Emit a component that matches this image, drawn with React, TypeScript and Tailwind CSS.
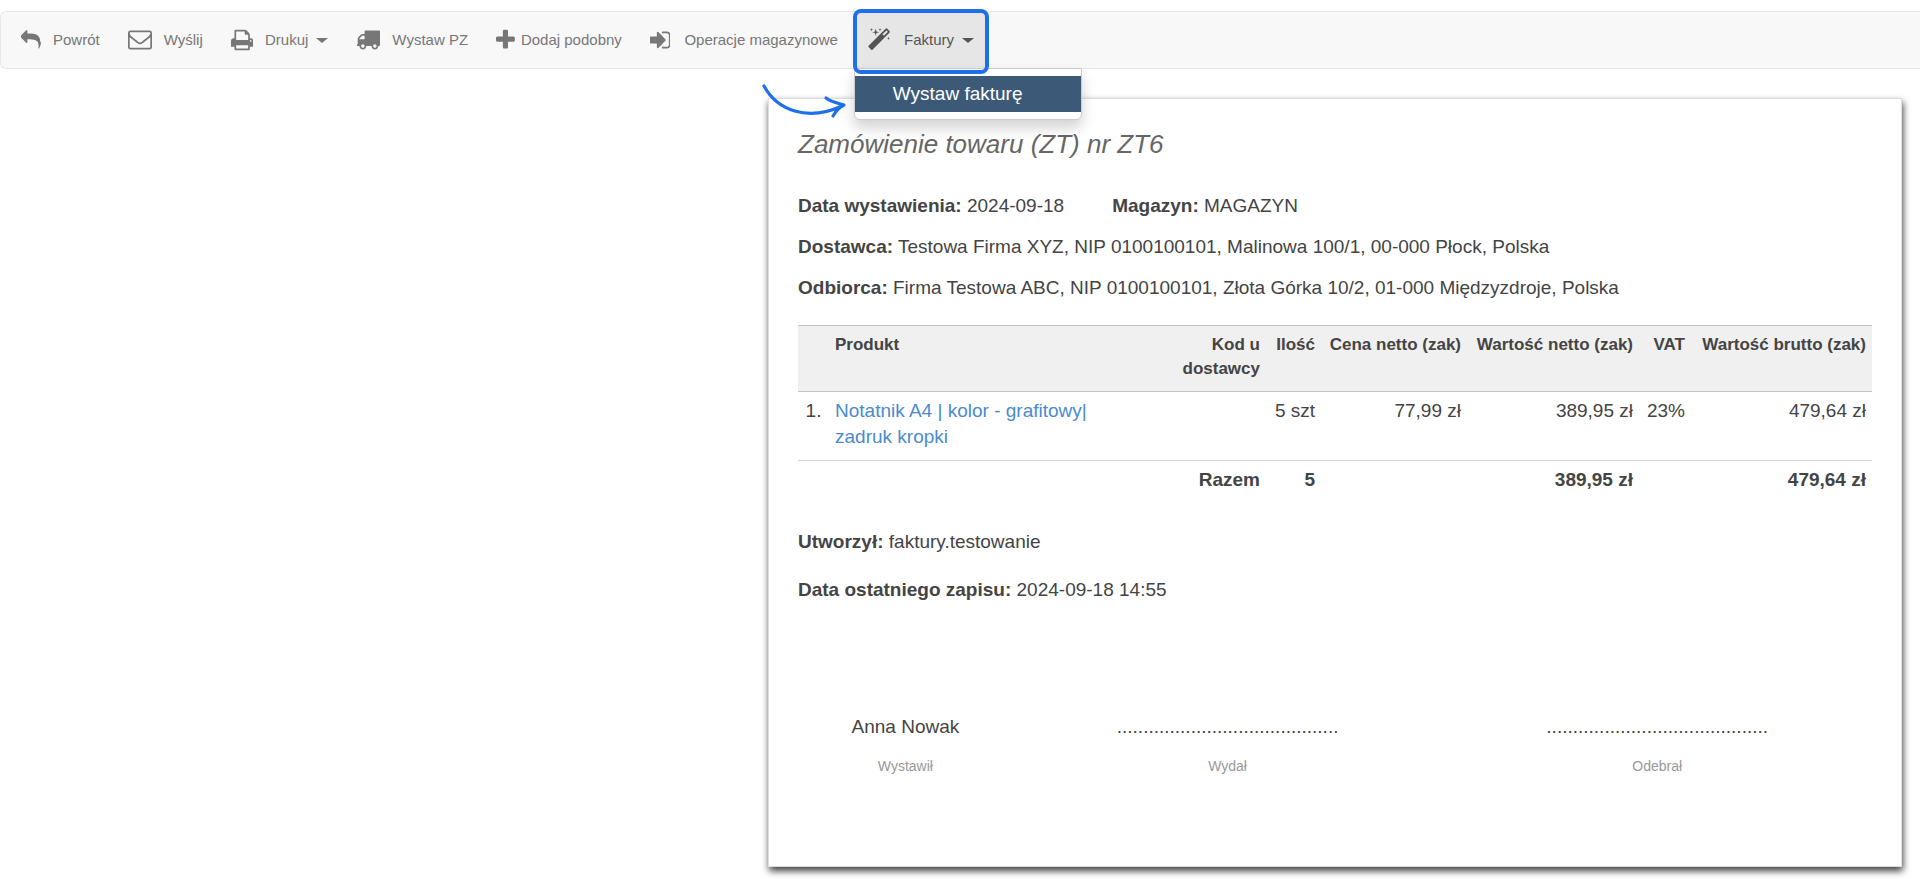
import { useState, type ReactNode } from "react";

type IconProps = { path: string; viewBox: string; className?: string };

const Icon = ({ path, viewBox, className = "h-6" }: IconProps) => (
  <svg viewBox={viewBox} className={`${className} w-auto shrink-0 fill-current`} aria-hidden="true">
    <path d={path} />
  </svg>
);

const icons = {
  reply: {
    viewBox: "0 0 1792 1792",
    path: "M1792 1120q0 166-127 451-3 7-10.5 24t-13.5 30-13 22q-12 17-28 17-15 0-23.5-10t-8.5-25q0-9 2.5-26.5t2.5-23.5q5-68 5-123 0-112-19.5-200.5t-54-153.5-89-112-118-77.5-147.5-47-168-24.5-187.5-7h-224v256q0 26-19 45t-45 19-45-19l-512-512q-19-19-19-45t19-45l512-512q19-19 45-19t45 19 19 45v256h224q713 0 875 403 53 134 53 333z",
  },
  envelope: {
    viewBox: "0 64 1792 1792",
    path: "M1664 1504v-768q-32 36-69 66-268 206-426 338-51 43-83 67t-86.5 48.5-102.5 24.5h-2q-48 0-102.5-24.5t-86.5-48.5-83-67q-158-132-426-338-37-30-69-66v768q0 13 9.5 22.5t22.5 9.5h1472q13 0 22.5-9.5t9.5-22.5zm0-1051v-24.5l-.5-13-3-12.5-5.5-9-9-7.5-14-2.5h-1472q-13 0-22.5 9.5t-9.5 22.5q0 168 147 284 193 152 401 317 6 5 35 29.5t46 37.5 44.5 31.5 50.5 27.5 43 9h2q20 0 43-9t50.5-27.5 44.5-31.5 46-37.5 35-29.5q208-165 401-317 54-43 100.5-115.5t46.5-131.5zm128-37v1088q0 66-47 113t-113 47h-1472q-66 0-113-47t-47-113v-1088q0-66 47-113t113-47h1472q66 0 113 47t47 113z",
  },
  print: {
    viewBox: "64 0 1664 1792",
    path: "M448 1536h896v-256h-896v256zm0-640h896v-384h-160q-40 0-68-28t-28-68v-160h-640v640zm1152 64q0-26-19-45t-45-19-45 19-19 45 19 45 45 19 45-19 19-45zm128 0v416q0 13-9.5 22.5t-22.5 9.5h-224v160q0 40-28 68t-68 28h-960q-40 0-68-28t-28-68v-160h-224q-13 0-22.5-9.5t-9.5-22.5v-416q0-79 56.5-135.5t135.5-56.5h64v-544q0-40 28-68t68-28h672q40 0 88 20t76 48l152 152q28 28 48 76t20 88v256h64q79 0 135.5 56.5t56.5 135.5z",
  },
  truck: {
    viewBox: "0 64 1792 1792",
    path: "M640 1408q0-52-38-90t-90-38-90 38-38 90 38 90 90 38 90-38 38-90zm-384-512h384v-256h-158q-13 0-22 9l-195 195q-9 9-9 22v30zm1280 512q0-52-38-90t-90-38-90 38-38 90 38 90 90 38 90-38 38-90zm256-1088v1024q0 15-4 26.5t-13.5 18.5-16.5 11.5-23.5 6-22.5 2-25.5 0-22.5-.5q0 106-75 181t-181 75-181-75-75-181h-384q0 106-75 181t-181 75-181-75-75-181h-64q-3 0-22.5.5t-25.5 0-22.5-2-23.5-6-16.5-11.5-13.5-18.5-4-26.5q0-26 19-45t45-19v-320q0-8-.5-35t0-38 2.5-34.5 6.5-37 14-30.5 22.5-30l198-198q19-19 50.5-32t58.5-13h160v-192q0-26 19-45t45-19h1024q26 0 45 19t19 45z",
  },
  plus: {
    viewBox: "192 0 1408 1792",
    path: "M1600 736v192q0 40-28 68t-68 28h-416v416q0 40-28 68t-68 28h-192q-40 0-68-28t-28-68v-416h-416q-40 0-68-28t-28-68v-192q0-40 28-68t68-28h416v-416q0-40 28-68t68-28h192q40 0 68 28t28 68v416h416q40 0 68 28t28 68z",
  },
  signIn: {
    viewBox: "128 0 1536 1792",
    path: "M1312 896q0 26-19 45l-544 544q-19 19-45 19t-45-19-19-45v-288h-448q-26 0-45-19t-19-45v-384q0-26 19-45t45-19h448v-288q0-26 19-45t45-19 45 19l544 544q19 19 19 45zm352-352v704q0 119-84.5 203.5t-203.5 84.5h-320q-13 0-22.5-9.5t-9.5-22.5q0-4-1-20t-.5-26.5 3-23.5 10-19.5 20.5-6.5h320q66 0 113-47t47-113v-704q0-66-47-113t-113-47h-312l-11.5-1-11.5-3-8-5.5-7-9-2-13.5q0-4-1-20t-.5-26.5 3-23.5 10-19.5 20.5-6.5h320q119 0 203.5 84.5t84.5 203.5z",
  },
  magic: {
    viewBox: "64 0 1664 1792",
    path: "M1254 581l293-293-107-107-293 293zm447-293q0 27-18 45l-1286 1286q-18 18-45 18t-45-18l-198-198q-18-18-18-45t18-45l1286-1286q18-18 45-18t45 18l198 198q18 18 18 45zm-1351-190l98 30-98 30-30 98-30-98-98-30 98-30 30-98zm350 162l196 60-196 60-60 196-60-196-196-60 196-60 60-196zm930 478l98 30-98 30-30 98-30-98-98-30 98-30 30-98zm-640-640l98 30-98 30-30 98-30-98-98-30 98-30 30-98z",
  },
};

const Caret = () => (
  <span className="h-0 w-0 border-x-6 border-t-5 border-x-transparent border-t-current" />
);

const toolButton = "flex h-14 items-center px-3.5 text-[15px] whitespace-nowrap";

function Field({ label, children }: { label: string; children: ReactNode }) {
  return (
    <p>
      <strong>{label}</strong> {children}
    </p>
  );
}

const signatures = [
  { name: "Anna Nowak", role: "Wystawił" },
  { name: ".".repeat(42), role: "Wydał" },
  { name: ".".repeat(42), role: "Odebrał" },
];

export default function App() {
  const [menuOpen, setMenuOpen] = useState(true);

  return (
    <div className="bg-white pt-[11px] pb-[14px] font-['Liberation_Sans',Arial,sans-serif] text-[19px] leading-[26px] text-[#444]">
      <nav className="flex h-[58px] rounded-l-md border-y border-l border-[#e7e7e7] bg-[#f8f8f8] pl-1.5 text-[#777]">
        <button type="button" className={`${toolButton} gap-3`}>
          <Icon {...icons.reply} className="h-5" />
          Powrót
        </button>
        <button type="button" className={`${toolButton} gap-3`}>
          <Icon {...icons.envelope} />
          Wyślij
        </button>
        <button type="button" className={`${toolButton} gap-3`}>
          <Icon {...icons.print} />
          <span className="flex items-center gap-2">
            Drukuj
            <Caret />
          </span>
        </button>
        <button type="button" className={`${toolButton} gap-3`}>
          <Icon {...icons.truck} />
          Wystaw PZ
        </button>
        <button type="button" className={`${toolButton} gap-1.5`}>
          <Icon {...icons.plus} />
          Dodaj podobny
        </button>
        <button type="button" className={`${toolButton} gap-3.5`}>
          <Icon {...icons.signIn} />
          Operacje magazynowe
        </button>

        <div className="relative ml-0.5">
          <button
            type="button"
            aria-expanded={menuOpen}
            onClick={() => setMenuOpen(!menuOpen)}
            className={`${toolButton} gap-3.5 bg-[#e6e6e6] text-[#555]`}
          >
            <Icon {...icons.magic} />
            <span className="flex items-center gap-2">
              Faktury
              <Caret />
            </span>
          </button>

          {menuOpen && (
            <div className="absolute top-full left-0 z-10 w-[228px] rounded-b-md border border-[#ccc] bg-white py-[7px] shadow-[0_8px_14px_rgba(0,0,0,0.18)]">
              <a href="#faktura" className="block bg-[#3c5a78] py-[5px] pl-[38px] text-white">
                Wystaw fakturę
              </a>
            </div>
          )}

          {/* highlight frame and arrow over the menu */}
          <div className="pointer-events-none absolute -inset-x-px -top-[3px] -bottom-1.5 z-20 rounded-lg border-4 border-[#1f6feb]" />
          <svg
            viewBox="0 0 90 40"
            className="pointer-events-none absolute top-[68px] -left-[94px] z-20 h-10 w-[90px] fill-none stroke-[#1f6feb]"
            strokeWidth="3.2"
            strokeLinecap="round"
            strokeLinejoin="round"
            aria-hidden="true"
          >
            <path d="M4 6C17 30 47 42 82 26" />
            <path d="M66 18C71 22 77 23 84 25C79 27 76 31 73 36" />
          </svg>
        </div>
      </nav>

      <main className="mt-[29px] mr-[18px] ml-[40%] border border-[#ddd] bg-white px-[29px] pt-[30px] pb-[90px] shadow-[1px_4px_7px_rgba(0,0,0,0.75)]">
        <h1 className="text-[26px] leading-[30px] text-[#666] italic">Zamówienie towaru (ZT) nr ZT6</h1>

        <div className="mt-[34px] flex flex-col gap-[15px]">
          <div className="flex gap-12">
            <Field label="Data wystawienia:">2024-09-18</Field>
            <Field label="Magazyn:">MAGAZYN</Field>
          </div>
          <Field label="Dostawca:">Testowa Firma XYZ, NIP 0100100101, Malinowa 100/1, 00-000 Płock, Polska</Field>
          <Field label="Odbiorca:">Firma Testowa ABC, NIP 0100100101, Złota Górka 10/2, 01-000 Międzyzdroje, Polska</Field>
        </div>

        <table className="mt-6 w-full table-fixed text-right [&_td]:px-1.5 [&_td]:pt-1.5 [&_td]:align-top [&_th]:px-1.5 [&_th]:pt-[7px] [&_th]:align-top">
          <colgroup>
            <col className="w-[31px]" />
            <col className="w-[265px]" />
            <col />
            <col className="w-[55px]" />
            <col className="w-[146px]" />
            <col className="w-[172px]" />
            <col className="w-[52px]" />
            <col className="w-[181px]" />
          </colgroup>
          <thead className="border-y border-[#c4c4c4] bg-[#f0f0f0] text-[17px] leading-6 whitespace-nowrap">
            <tr>
              <th />
              <th className="text-left">Produkt</th>
              <th className="pb-[10px]">
                Kod u
                <br />
                dostawcy
              </th>
              <th>Ilość</th>
              <th>Cena netto (zak)</th>
              <th>Wartość netto (zak)</th>
              <th>VAT</th>
              <th>Wartość brutto (zak)</th>
            </tr>
          </thead>
          <tbody className="border-b border-[#d4d4d4] whitespace-nowrap">
            <tr>
              <td className="text-center">1.</td>
              <td className="pb-[10px] text-left">
                <a href="#produkt" className="text-[#4a8bd0]">
                  Notatnik A4 | kolor - grafitowy|
                  <br />
                  zadruk kropki
                </a>
              </td>
              <td />
              <td>5 szt</td>
              <td>77,99 zł</td>
              <td>389,95 zł</td>
              <td>23%</td>
              <td>479,64 zł</td>
            </tr>
          </tbody>
          <tfoot className="font-bold whitespace-nowrap">
            <tr>
              <td />
              <td />
              <td>Razem</td>
              <td>5</td>
              <td />
              <td>389,95 zł</td>
              <td />
              <td>479,64 zł</td>
            </tr>
          </tfoot>
        </table>

        <div className="mt-9 flex flex-col gap-[22px]">
          <Field label="Utworzył:">faktury.testowanie</Field>
          <Field label="Data ostatniego zapisu:">2024-09-18 14:55</Field>
        </div>

        <div className="mt-[111px] grid grid-cols-[1fr_2fr_2fr] text-center">
          {signatures.map((item) => (
            <div key={item.role}>
              <p>{item.name}</p>
              <p className="mt-4 text-sm text-[#999]">{item.role}</p>
            </div>
          ))}
        </div>
      </main>
    </div>
  );
}
